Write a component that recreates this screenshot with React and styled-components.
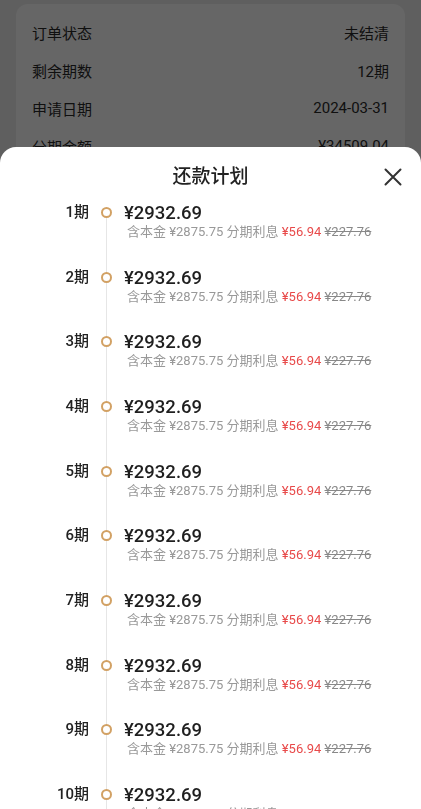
import React from "react";
import styled, { createGlobalStyle } from "styled-components";

const Global = createGlobalStyle`
  html, body { margin: 0; padding: 0; }
  body {
    width: 421px;
    height: 809px;
    overflow: hidden;
    background: #eeeeee;
    font-family: Roboto, "Noto Sans CJK SC", "Noto Sans", sans-serif;
    color: #333;
  }
`;

const Page = styled.div`
  padding: 4px 16px 0;
`;

const InfoCard = styled.div`
  background: #ffffff;
  border-radius: 12px;
  padding: 9px 16px;
`;

const InfoRow = styled.div`
  display: flex;
  justify-content: space-between;
  align-items: center;
  height: 38px;
  font-size: 15px;
  color: #2a2a2a;
`;

const Overlay = styled.div`
  position: fixed;
  inset: 0;
  background: rgba(0, 0, 0, 0.6);
`;

const Sheet = styled.div`
  position: fixed;
  left: 0;
  right: 0;
  top: 147px;
  bottom: 0;
  background: #fff;
  border-radius: 16px 16px 0 0;
  overflow: hidden;
  display: flex;
  flex-direction: column;
`;

const Header = styled.div`
  position: relative;
  padding: 17px 0 10px;
  text-align: center;
  font-size: 19px;
  line-height: 26px;
  font-weight: 500;
  color: #222;
`;

const CloseBtn = styled.button`
  position: absolute;
  right: 19px;
  top: 21px;
  width: 18px;
  height: 18px;
  padding: 0;
  border: none;
  background: none;
  display: flex;
`;

const List = styled.div`
  display: flex;
  flex-direction: column;
`;

const Item = styled.div`
  display: grid;
  grid-template-columns: 89px 35px 1fr;
  height: 64.67px;
`;

const Period = styled.div`
  text-align: right;
  font-size: 15px;
  line-height: 24px;
  font-weight: 500;
  color: #222;
`;

const Rail = styled.div`
  position: relative;
  &::after {
    content: "";
    position: absolute;
    left: 17px;
    width: 1px;
    top: 12px;
    bottom: -12px;
    background: #e6e6e6;
  }
`;

const Dot = styled.span`
  position: absolute;
  z-index: 1;
  left: 12px;
  top: 7px;
  width: 11px;
  height: 11px;
  box-sizing: border-box;
  border-radius: 50%;
  border: 2.5px solid #d2a164;
  background: #fff;
`;

const Content = styled.div`
  display: flex;
  flex-direction: column;
  padding-top: 1px;
`;

const Amount = styled.div`
  font-size: 18.5px;
  line-height: 24px;
  font-weight: 500;
  color: #1f1f1f;
`;

const Detail = styled.div`
  margin-top: -2px;
  padding-left: 3px;
  font-size: 13px;
  line-height: 17px;
  color: #999;
  white-space: nowrap;
`;

const Red = styled.span`
  color: #e84a4a;
`;

const Struck = styled.span`
  color: #888;
  text-decoration: line-through;
`;

const info = [
  ["订单状态", "未结清"],
  ["剩余期数", "12期"],
  ["申请日期", "2024-03-31"],
  ["分期金额", "¥34509.04"],
  ["已还金额", "¥0.00"],
];

const periods = Array.from({ length: 12 }, (_, i) => i + 1);

export default function App() {
  return (
    <>
      <Global />
      <Page>
        <InfoCard>
          {info.map(([k, v]) => (
            <InfoRow key={k}>
              <span>{k}</span>
              <span>{v}</span>
            </InfoRow>
          ))}
        </InfoCard>
      </Page>
      <Overlay />
      <Sheet>
        <Header>
          还款计划
          <CloseBtn aria-label="关闭">
            <svg width="18" height="18" viewBox="0 0 18 18">
              <path d="M1.5 1.5 L16.5 16.5 M16.5 1.5 L1.5 16.5" stroke="#333" strokeWidth="2" strokeLinecap="round" fill="none" />
            </svg>
          </CloseBtn>
        </Header>
        <List>
          {periods.map((p) => (
            <Item key={p}>
              <Period>{p}期</Period>
              <Rail>
                <Dot />
              </Rail>
              <Content>
                <Amount>¥2932.69</Amount>
                <Detail>
                  含本金 ¥2875.75 分期利息 <Red>¥56.94</Red> <Struck>¥227.76</Struck>
                </Detail>
              </Content>
            </Item>
          ))}
        </List>
      </Sheet>
    </>
  );
}
